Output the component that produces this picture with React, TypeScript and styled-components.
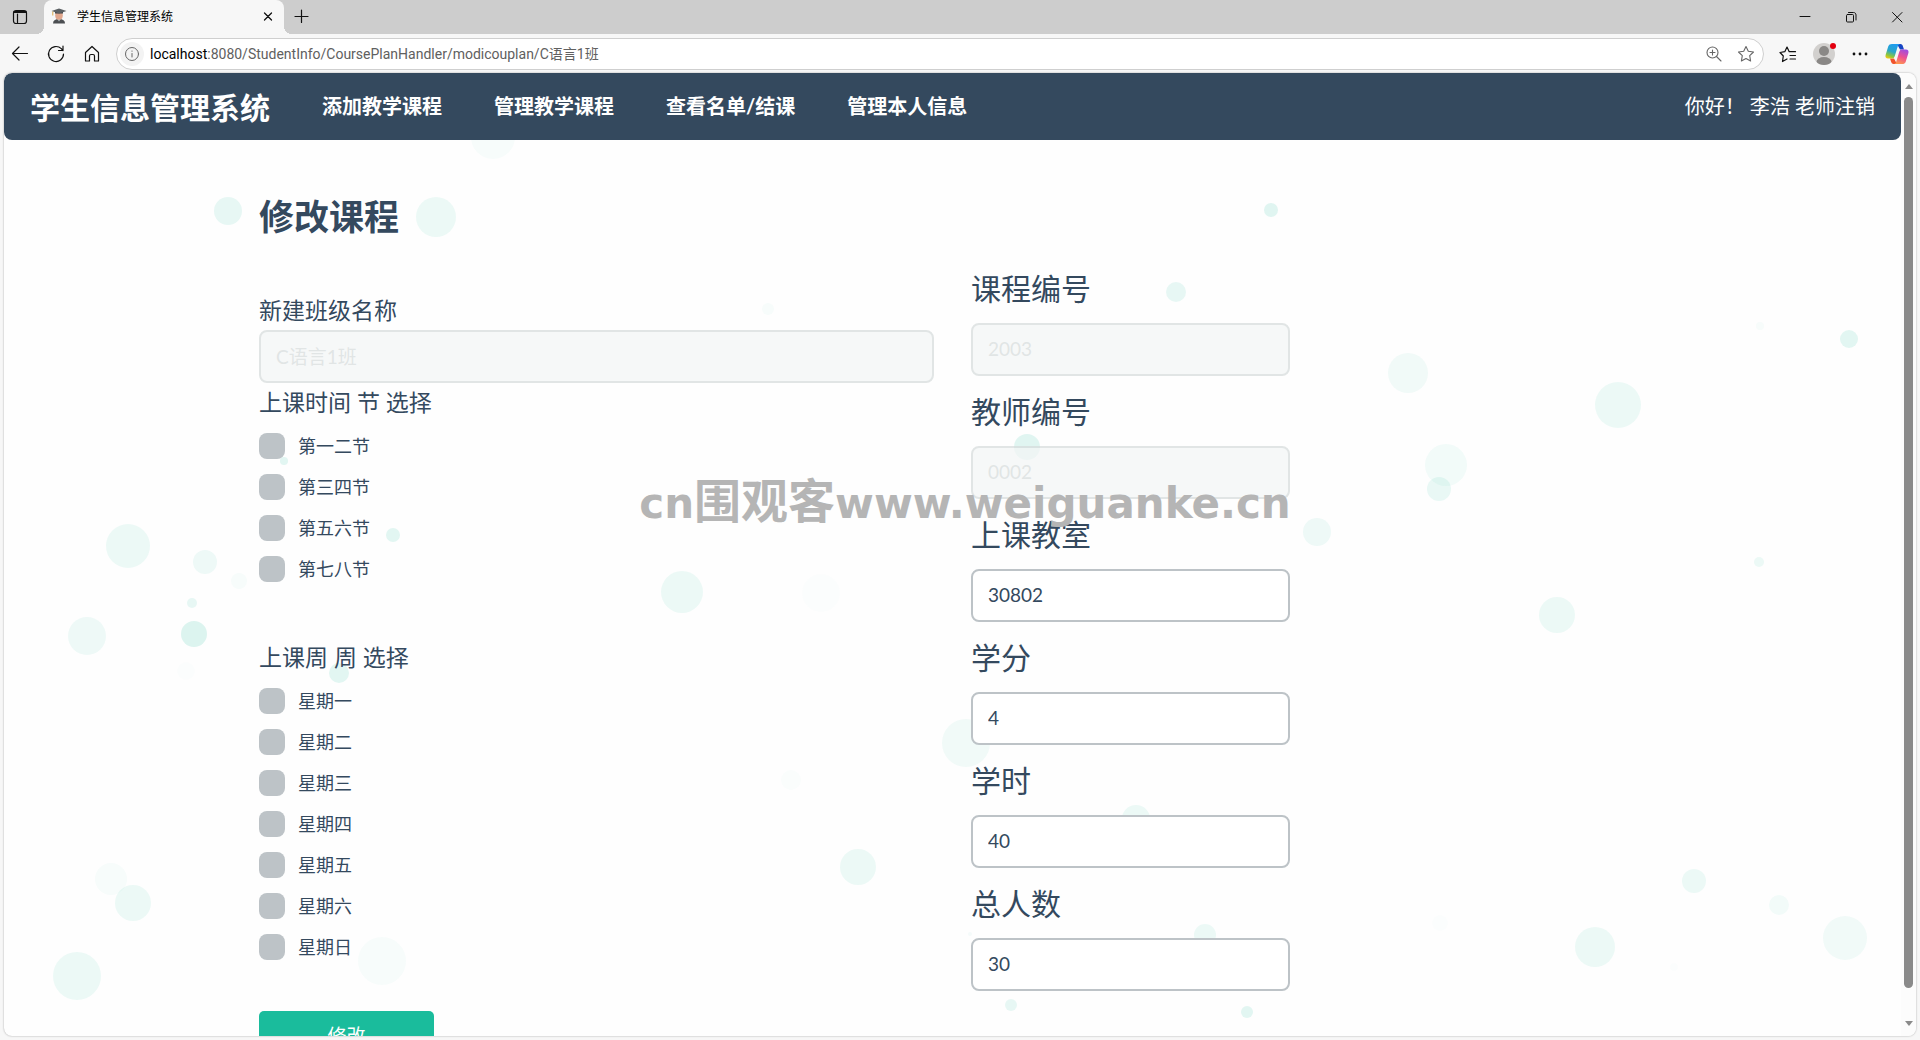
import React from "react";
import styled, { createGlobalStyle, css } from "styled-components";

const ink = "#34495e";
const teal = "#1abc9c";
const uiFont = `"Open Sans", "Noto Sans CJK SC", sans-serif`;
const pageFont = `Lato, "Noto Sans CJK SC", sans-serif`;

const GlobalStyle = createGlobalStyle`
  *, *::before, *::after { box-sizing: border-box; }
  body { margin: 0; }
  button, input { font: inherit; color: inherit; }
`;

/* ---------- browser window ---------- */

const Shell = styled.div`
  position: relative;
  display: flex;
  flex-direction: column;
  height: 100vh;
  overflow: hidden;
  background: #f7f7f7;
  font-family: ${uiFont};
  color: #1b1b1b;
`;

const TabStrip = styled.div`
  display: flex;
  align-items: stretch;
  height: 34px;
  background: #cdcdcd;
`;

const IconButton = styled.button<{ $width?: number }>`
  display: flex;
  flex: none;
  align-items: center;
  justify-content: center;
  width: ${(p) => p.$width ?? 36}px;
  padding: 0;
  border: 0;
  background: none;
  svg { display: block; }
`;

const Tab = styled.div`
  position: relative;
  display: flex;
  align-items: center;
  width: 240px;
  margin-left: 4px;
  padding: 0 4px 2px 7px;
  border-radius: 8px 8px 0 0;
  background: #f7f7f7;
  font-size: 12px;
  color: #000;

  &::before, &::after {
    content: "";
    position: absolute;
    bottom: 0;
    width: 8px;
    height: 8px;
  }
  &::before {
    right: 100%;
    background: radial-gradient(circle at 0 0, transparent 8px, #f7f7f7 8px);
  }
  &::after {
    left: 100%;
    background: radial-gradient(circle at 100% 0, transparent 8px, #f7f7f7 8px);
  }
`;

const TabTitle = styled.span`
  flex: 1;
  margin-left: 10px;
`;

const WindowControls = styled.div`
  display: flex;
  margin-left: auto;
`;

const Toolbar = styled.div`
  display: flex;
  align-items: stretch;
  height: 39px;
  padding: 4px 4px 3px 2px;
`;

const AddressBar = styled.div`
  display: flex;
  flex: 1;
  align-items: stretch;
  margin: 0 6px;
  padding: 0 1px 0 3px;
  border: 1px solid #cfcfcf;
  border-radius: 16px;
  background: #fff;
`;

const SiteInfo = styled.button`
  display: flex;
  align-self: center;
  align-items: center;
  justify-content: center;
  width: 24px;
  height: 24px;
  padding: 0;
  border: 0;
  border-radius: 50%;
  background: #f3f3f3;
`;

const Url = styled.div`
  flex: 1;
  align-self: center;
  margin-left: 6px;
  font-family: Roboto, "Noto Sans CJK SC", sans-serif;
  font-size: 14px;
  line-height: 20px;
  color: #606060;
  b { font-weight: 400; color: #000; }
`;

const Frame = styled.div`
  position: relative;
  display: flex;
  flex: 1;
  min-height: 0;
  margin: 0 4px 4px;
  border-radius: 8px;
  background: #fefefe;
  box-shadow: 0 0 2px rgba(0, 0, 0, 0.35);
  overflow: hidden;
`;

const Scrollbar = styled.div`
  display: flex;
  flex: none;
  flex-direction: column;
  align-items: center;
  width: 15px;
  padding: 11px 0 10px;
  background: #fcfcfc;
`;

const Arrow = styled.span<{ $down?: boolean }>`
  border: 0 solid transparent;
  border-width: 0 4px;
  ${(p) => (p.$down ? css`border-top: 5px solid #8a8a8a;` : css`border-bottom: 5px solid #8a8a8a;`)}
`;

const Track = styled.div`
  flex: 1;
  margin: 8px 0 33px;
  width: 9px;
  border-radius: 5px;
  background: #8a8a8a;
`;

/* ---------- page ---------- */

const Page = styled.div`
  position: relative;
  flex: 1;
  overflow-y: auto;
  scrollbar-width: none;
  font-family: ${pageFont};
  color: ${ink};
`;

const Bubbles = styled.svg`
  position: absolute;
  inset: 0;
  width: 100%;
  height: 100%;
  fill: ${teal};
`;

const Navbar = styled.nav`
  position: relative;
  display: flex;
  align-items: center;
  height: 67px;
  padding: 0 26px 2px;
  border-radius: 8px;
  background: ${ink};
  color: #fff;
  a { color: inherit; text-decoration: none; }
`;

const Brand = styled.a`
  margin-right: 26px;
  font-size: 30px;
  font-weight: 700;
`;

const NavLink = styled.a`
  padding: 0 26px;
  font-size: 20px;
  font-weight: 700;
`;

const Greeting = styled.div`
  margin-left: auto;
  font-size: 20px;
  white-space: pre;
`;

const Container = styled.main`
  position: relative;
  max-width: 1425px;
  margin: 0 auto;
  padding: 55px 19px 60px;
`;

const Title = styled.h1`
  margin: 0 0 16px;
  font-size: 35px;
  line-height: 42px;
  font-weight: 700;
`;

const Form = styled.form`
  display: grid;
  grid-template-columns: 1fr 1fr;
  column-gap: 37px;
  align-items: start;
`;

const ClassColumn = styled.div`
  padding-top: 42px;
`;

const Caption = styled.label`
  display: block;
  font-size: 23px;
  line-height: 30px;
`;

const Input = styled.input`
  display: block;
  width: 100%;
  height: 53px;
  padding: 0 15px 2px;
  border: 2px solid #bdc3c7;
  border-radius: 8px;
  background: #fff;
  font-size: 19px;
  &:disabled {
    opacity: 0.7;
    border-color: #d5dbdb;
    background: #f4f6f6;
    color: #d5dbdb;
  }
`;

const ClassName = styled.div`
  display: grid;
  gap: 5px;
  margin-bottom: 4px;
`;

const Group = styled.div`
  display: grid;
  gap: 16px;
  & + & { margin-top: 60px; }
`;

const Options = styled.div`
  display: grid;
  gap: 15px;
  justify-items: start;
`;

const Option = styled.label`
  display: flex;
  align-items: center;
  gap: 13px;
  height: 26px;
  font-size: 18px;
  line-height: 24px;
`;

const Tick = styled.input`
  appearance: none;
  width: 26px;
  height: 26px;
  margin: 0;
  border-radius: 8px;
  background: #bdc3c7;
  &:checked { background: ${teal}; }
`;

const Submit = styled.button`
  width: 175px;
  height: 50px;
  margin-top: 51px;
  padding: 0 0 4px;
  border: 0;
  border-radius: 5px;
  background: ${teal};
  color: #fff;
  font-size: 19px;
`;

const Field = styled.div`
  max-width: 319px;
`;

const FieldLabel = styled.label`
  display: block;
  padding: 15px 0;
  font-size: 30px;
  line-height: 40px;
`;

const Watermark = styled.div`
  position: absolute;
  top: 472px;
  left: 0;
  right: 0;
  padding-left: 10px;
  text-align: center;
  font: 700 42px/60px "DejaVu Sans", "Noto Sans CJK SC", sans-serif;
  color: #b5b5b5;
  pointer-events: none;
`;

const WatermarkName = styled.span`
  font-size: 47px;
`;

/* ---------- data ---------- */

const bubbles: [number, number, number, number][] = [
  [228, 211, 14, 0.1], [436, 217, 20, 0.08], [493, 137, 22, 0.03], [768, 309, 6, 0.03],
  [1271, 210, 7, 0.13], [1176, 292, 10, 0.1], [1849, 339, 9, 0.12], [1760, 326, 4, 0.03],
  [1408, 373, 20, 0.06], [1618, 405, 23, 0.08], [1446, 465, 21, 0.05], [1439, 489, 12, 0.09],
  [1317, 532, 14, 0.07], [1759, 562, 5, 0.08], [1557, 615, 18, 0.08], [1027, 447, 13, 0.13],
  [128, 546, 22, 0.08], [205, 562, 12, 0.07], [239, 581, 8, 0.03], [393, 535, 7, 0.12],
  [682, 592, 21, 0.08], [821, 593, 19, 0.01], [192, 603, 5, 0.1], [194, 634, 13, 0.15],
  [87, 636, 19, 0.07], [186, 671, 9, 0.01], [339, 673, 10, 0.12], [284, 461, 4, 0.12],
  [966, 743, 24, 0.06], [791, 780, 10, 0.02], [858, 867, 18, 0.08], [1136, 819, 14, 0.08],
  [1205, 935, 11, 0.08], [970, 934, 2, 0.04], [1011, 1005, 6, 0.1], [1247, 1012, 6, 0.12],
  [1440, 923, 8, 0.01], [111, 879, 16, 0.03], [133, 903, 18, 0.08], [77, 976, 24, 0.08],
  [382, 961, 24, 0.03], [1595, 947, 20, 0.08], [1694, 881, 12, 0.08], [1779, 905, 10, 0.05],
  [1845, 938, 22, 0.06], [1674, 967, 4, 0.01],
];

const navItems = ["添加教学课程", "管理教学课程", "查看名单/结课", "管理本人信息"];
const periods = ["第一二节", "第三四节", "第五六节", "第七八节"];
const weekdays = ["星期一", "星期二", "星期三", "星期四", "星期五", "星期六", "星期日"];
const fields = [
  { id: "course", label: "课程编号", value: "2003", disabled: true },
  { id: "teacher", label: "教师编号", value: "0002", disabled: true },
  { id: "room", label: "上课教室", value: "30802" },
  { id: "credit", label: "学分", value: "4" },
  { id: "hours", label: "学时", value: "40" },
  { id: "total", label: "总人数", value: "30" },
];

/* ---------- icons ---------- */

const Icon = ({ size = 20, color = "#111", width = 1.2, children }: {
  size?: number; color?: string; width?: number; children: React.ReactNode;
}) => (
  <svg width={size} height={size} viewBox={`0 0 ${size} ${size}`} fill="none" stroke={color}
    strokeWidth={width} strokeLinecap="round" strokeLinejoin="round" aria-hidden="true">
    {children}
  </svg>
);

const starPath = "M10 2.5l2.3 4.8 5.2.7-3.8 3.7.9 5.3-4.6-2.5-4.6 2.5.9-5.3L2.5 8l5.200-.7z";

const Graduate = () => (
  <svg width="16" height="16" viewBox="0 0 16 16" aria-hidden="true">
    <path d="M2 15.500c0-3 2-4.500 6-4.500s6 1.500 6 4.500z" fill="#4c4f52" />
    <path d="M6 10.500h4l-2 3z" fill="#b9c4c9" />
    <ellipse cx="8" cy="7.500" rx="3.800" ry="4.200" fill="#e0a68c" />
    <path d="M4 5.500h8v-2H4z" fill="#3c3f42" />
    <path d="M0.500 3L8 0.500 15.500 3 8 5.500z" fill="#5b5f62" />
    <path d="M1.800 3.500v4" stroke="#d9a94a" strokeWidth="1" />
  </svg>
);

const Avatar = () => (
  <svg width="24" height="24" viewBox="0 0 24 24" aria-hidden="true">
    <defs><clipPath id="face"><circle cx="12" cy="12" r="11" /></clipPath></defs>
    <circle cx="12" cy="12" r="11" fill="#d2d0ce" />
    <g clipPath="url(#face)" fill="#8a8886">
      <circle cx="12" cy="9" r="5" />
      <ellipse cx="12" cy="20" rx="7.500" ry="5" />
    </g>
    <circle cx="21" cy="4" r="3" fill="#e3000f" />
  </svg>
);

const Copilot = () => (
  <svg width="24" height="22" viewBox="0 0 24 22" aria-hidden="true">
    <defs>
      <linearGradient id="cpA" x1="0.600" y1="0" x2="0.200" y2="1">
        <stop offset="0" stopColor="#1f9cf0" /><stop offset="0.500" stopColor="#2aa7c9" />
        <stop offset="0.800" stopColor="#8cc63e" /><stop offset="1" stopColor="#f2c811" />
      </linearGradient>
      <linearGradient id="cpB" x1="0.700" y1="0" x2="0.300" y2="1">
        <stop offset="0" stopColor="#a04be0" /><stop offset="0.500" stopColor="#ee5090" />
        <stop offset="1" stopColor="#ff9a4d" />
      </linearGradient>
    </defs>
    <path d="M12 1h3.500c1.500 0 2 1 2.400 2.200L19 6.500h-4z" fill="#1746c4" />
    <path d="M12 21H8.500c-1.500 0-2-1-2.400-2.200L5 15.500h4z" fill="#f0532d" />
    <path d="M7 1h8c-1.400.4-1.900 1.300-2.300 2.600L9.800 13c-.5 1.700-1.400 2.500-3 2.500H3c-2 0-3-1.500-2.400-3.600L3.200 3.600C3.800 1.800 5 1 7 1z" fill="url(#cpA)" />
    <path d="M17 21H9c1.400-.4 1.900-1.300 2.300-2.600L14.200 9c.5-1.700 1.400-2.500 3-2.500H21c2 0 3 1.500 2.400 3.600l-2.600 8.300C20.200 20.200 19 21 17 21z" fill="url(#cpB)" />
  </svg>
);

/* ---------- parts ---------- */

function OptionGroup({ id, caption, items }: { id: string; caption: string; items: string[] }) {
  return (
    <Group role="group" aria-labelledby={id}>
      <Caption as="div" id={id}>{caption}</Caption>
      <Options>
        {items.map((item) => (
          <Option key={item}>
            <Tick type="checkbox" name={id} value={item} />
            {item}
          </Option>
        ))}
      </Options>
    </Group>
  );
}

function BrowserChrome() {
  return (
    <>
      <TabStrip>
        <IconButton $width={40} aria-label="标签页操作">
          <Icon><rect x="3.500" y="3.500" width="13" height="13" rx="2.500" /><path d="M4 5.500h12M4 4.500h12M7.500 7v9.500" /></Icon>
        </IconButton>
        <Tab>
          <Graduate />
          <TabTitle>学生信息管理系统</TabTitle>
          <IconButton $width={24} aria-label="关闭标签页">
            <Icon size={12} width={1.300}><path d="M2.500 3l7 7M9.500 3l-7 7" /></Icon>
          </IconButton>
        </Tab>
        <IconButton aria-label="新建标签页">
          <Icon size={16}><path d="M7.500 1v12.500M1 7.500h13" /></Icon>
        </IconButton>
        <WindowControls>
          <IconButton $width={46} aria-label="最小化">
            <Icon size={12} width={1}><path d="M1 5.500h10" /></Icon>
          </IconButton>
          <IconButton $width={46} aria-label="还原">
            <Icon size={12} width={1}><rect x="1.500" y="3.500" width="7" height="7.500" rx="1" /><path d="M3.500 1.500h5c1.500 0 2.500 1 2.500 2.500v5" /></Icon>
          </IconButton>
          <IconButton $width={46} aria-label="关闭">
            <Icon size={12} width={1}><path d="M1.500 1.500l9.500 9.500M11 1.500L1.500 11" /></Icon>
          </IconButton>
        </WindowControls>
      </TabStrip>
      <Toolbar>
        <IconButton aria-label="返回"><Icon><path d="M17.500 9.500H2.500M9 3L2.500 9.500 9 16" /></Icon></IconButton>
        <IconButton aria-label="刷新"><Icon><path d="M17.500 10a7.500 7.500 0 1 1-2.200-5.300L17 6.500M17 2v4.500h-4.500" /></Icon></IconButton>
        <IconButton aria-label="主页"><Icon><path d="M3.500 8.500L10 2.500l6.500 6v8.500h-4v-5c0-1-.5-1.500-1.500-1.500H9c-1 0-1.500.5-1.500 1.500v5h-4z" /></Icon></IconButton>
        <AddressBar>
          <SiteInfo aria-label="网站信息">
            <Icon size={16} color="#666" width={1}><circle cx="8" cy="8" r="6.500" /><path d="M8 7.500v3.500M8 5v.3" /></Icon>
          </SiteInfo>
          <Url><b>localhost</b>:8080/StudentInfo/CoursePlanHandler/modicouplan/C语言1班</Url>
          <IconButton $width={32} aria-label="缩放">
            <Icon color="#666" width={1.100}><circle cx="8.500" cy="8.500" r="5.500" /><path d="M12.500 12.500l4.500 4.500M8.500 6v5M6 8.500h5" /></Icon>
          </IconButton>
          <IconButton $width={32} aria-label="收藏">
            <Icon color="#666" width={1.100}><path d={starPath} /></Icon>
          </IconButton>
        </AddressBar>
        <IconButton aria-label="收藏夹">
          <Icon><path d="M9 15l-4.500 2.500.8-5.500L2 8.500l4.800-.8L9 3l2.200 4.700h6.300M12 11.500h5.500M12 15h5.500" /></Icon>
        </IconButton>
        <IconButton aria-label="个人资料"><Avatar /></IconButton>
        <IconButton aria-label="更多">
          <Icon width={0}><g fill="#111"><circle cx="4" cy="10" r="1.400" /><circle cx="10" cy="10" r="1.400" /><circle cx="16" cy="10" r="1.400" /></g></Icon>
        </IconButton>
        <IconButton $width={38} aria-label="Copilot"><Copilot /></IconButton>
      </Toolbar>
    </>
  );
}

export default function App() {
  return (
    <Shell>
      <GlobalStyle />
      <BrowserChrome />
      <Frame>
        <Page>
          <Bubbles aria-hidden="true">
            <g transform="translate(-4 -73)">
              {bubbles.map(([x, y, r, o]) => (
                <circle key={`${x}-${y}`} cx={x} cy={y} r={r} opacity={o} />
              ))}
            </g>
          </Bubbles>
          <Navbar>
            <Brand href="#">学生信息管理系统</Brand>
            {navItems.map((item) => (
              <NavLink href="#" key={item}>{item}</NavLink>
            ))}
            <Greeting>你好！ 李浩 老师<a href="#">注销</a></Greeting>
          </Navbar>
          <Container>
            <Title>修改课程</Title>
            <Form onSubmit={(e) => e.preventDefault()}>
              <ClassColumn>
                <ClassName>
                  <Caption htmlFor="className">新建班级名称</Caption>
                  <Input id="className" defaultValue="C语言1班" disabled />
                </ClassName>
                <OptionGroup id="period" caption="上课时间 节 选择" items={periods} />
                <OptionGroup id="weekday" caption="上课周 周 选择" items={weekdays} />
                <Submit type="submit">修改</Submit>
              </ClassColumn>
              <div>
                {fields.map((f) => (
                  <Field key={f.id}>
                    <FieldLabel htmlFor={f.id}>{f.label}</FieldLabel>
                    <Input id={f.id} defaultValue={f.value} disabled={f.disabled} />
                  </Field>
                ))}
              </div>
            </Form>
          </Container>
        </Page>
        <Scrollbar aria-hidden="true">
          <Arrow />
          <Track />
          <Arrow $down />
        </Scrollbar>
      </Frame>
      <Watermark>cn<WatermarkName>围观客</WatermarkName>www.weiguanke.cn</Watermark>
    </Shell>
  );
}
